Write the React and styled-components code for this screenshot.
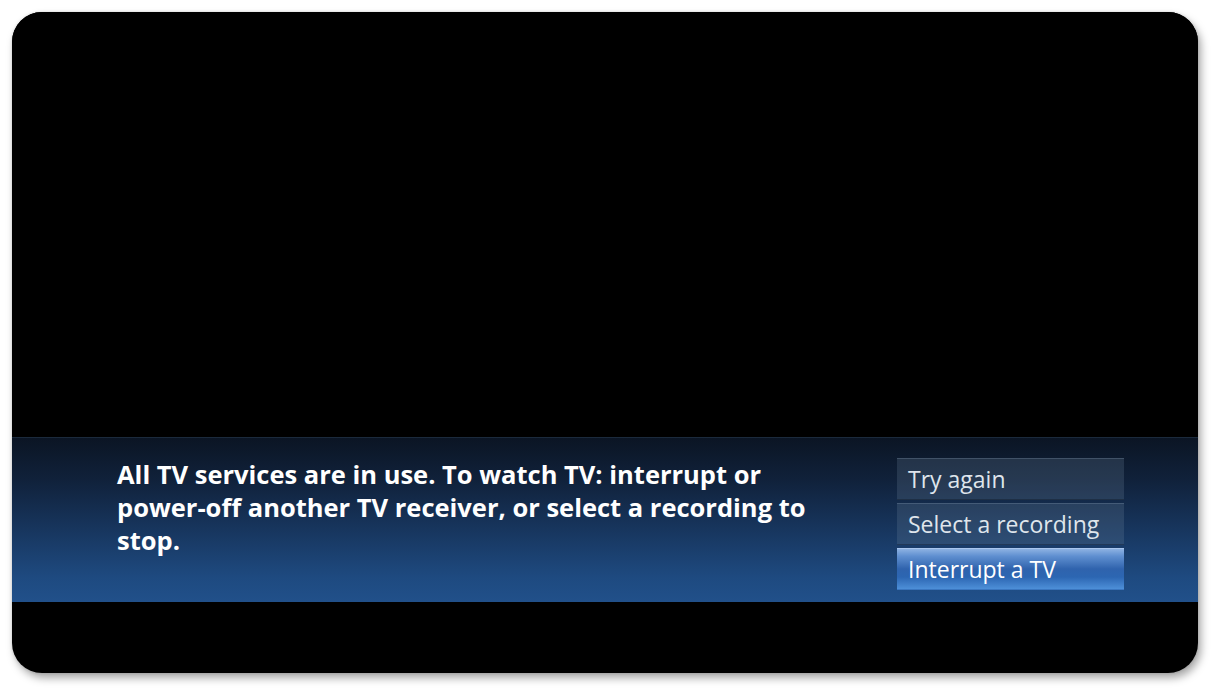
import React from "react";
import styled, { createGlobalStyle } from "styled-components";

const Global = createGlobalStyle`
  html, body { margin: 0; padding: 0; background: #ffffff; }
  body { width: 1214px; height: 693px; overflow: hidden; }
`;

const Page = styled.div`
  padding: 12px 16px 20px 12px;
`;

const Screen = styled.div`
  width: 1186px;
  height: 661px;
  background: #000;
  border-radius: 30px;
  box-shadow: 3px 5px 9px rgba(0, 0, 0, 0.35), 0 0 3px rgba(0, 0, 0, 0.15);
  display: flex;
  flex-direction: column;
  overflow: hidden;
`;

const Video = styled.div`
  flex: 0 0 425px;
  background: #000;
`;

const Banner = styled.div`
  flex: 0 0 165px;
  display: flex;
  align-items: flex-start;
  padding: 20px 0 0 105px;
  box-sizing: border-box;
  background: linear-gradient(
    to bottom,
    #0b1524 0%,
    #10213a 25%,
    #17355d 55%,
    #1e4a80 85%,
    #21508a 100%
  );
  border-top: 1px solid #1b2a3c;
  font-family: "Open Sans", "Noto Sans", sans-serif;
`;

const Message = styled.p`
  margin: 0;
  width: 712px;
  color: #ffffff;
  font-weight: 700;
  font-size: 25.5px;
  line-height: 33px;
  letter-spacing: 0;
`;

const Options = styled.div`
  margin-left: auto;
  margin-right: 74px;
  width: 227px;
  display: flex;
  flex-direction: column;
  gap: 3px;
`;

const Option = styled.div`
  height: 42px;
  box-sizing: border-box;
  padding-left: 11px;
  display: flex;
  align-items: center;
  font-size: 23px;
  color: ${(p) => (p.$selected ? "#ffffff" : "#dfe5ec")};
  background: ${(p) =>
    p.$selected
      ? "linear-gradient(to bottom, #8db2e2 0%, #5f8fd0 18%, #2f63ad 50%, #2c66b2 70%, #4d8fd8 100%)"
      : "rgba(120, 140, 165, 0.22)"};
  border-top: 1px solid ${(p) => (p.$selected ? "#a9c6ee" : "rgba(150,170,195,0.25)")};
  border-bottom: 1px solid ${(p) => (p.$selected ? "#3a76c0" : "rgba(0,0,0,0.25)")};
`;

export default function App() {
  return (
    <>
      <Global />
      <Page>
        <Screen>
          <Video />
          <Banner>
            <Message>
              All TV services are in use. To watch TV: interrupt or power-off another TV
              receiver, or select a recording to stop.
            </Message>
            <Options>
              <Option>Try again</Option>
              <Option>Select a recording</Option>
              <Option $selected>Interrupt a TV</Option>
            </Options>
          </Banner>
        </Screen>
      </Page>
    </>
  );
}
